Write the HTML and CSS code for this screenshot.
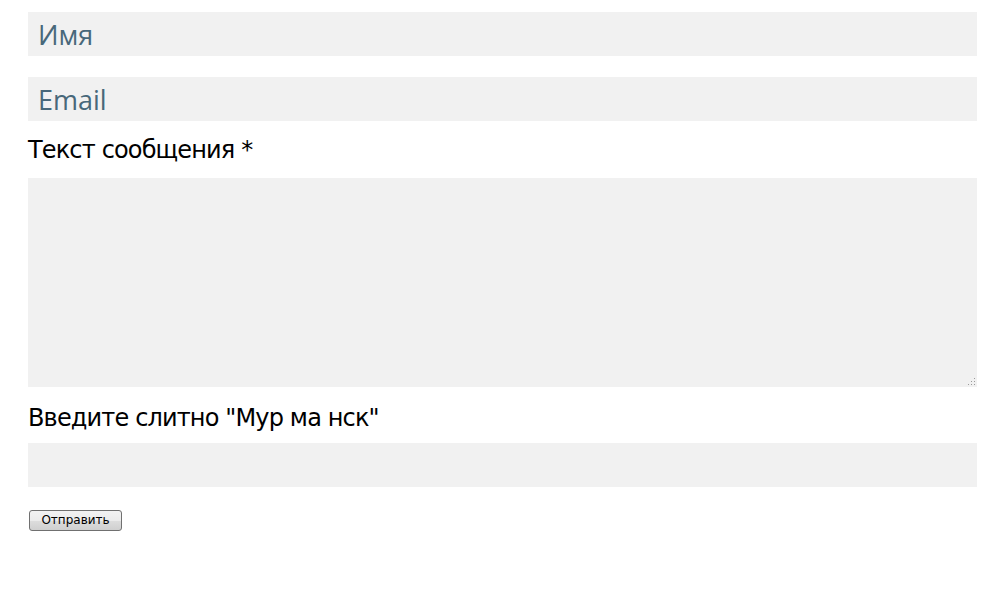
FILE: index.html
```html
<!DOCTYPE html>
<html lang="ru">
<head>
<meta charset="utf-8">
<link rel="stylesheet" href="styles.css">
</head>
<body>
<form class="form">
  <input class="field field-first" type="text" placeholder="Имя">
  <input class="field field-second" type="text" placeholder="Email">
  <label class="label label-msg">Текст сообщения *</label>
  <div class="area-wrap">
    <textarea class="area"></textarea>
    <span class="grip"></span>
  </div>
  <label class="label label-captcha">Введите слитно "Мур ма нск"</label>
  <input class="field field-captcha" type="text">
  <div class="actions"><button class="btn" type="button">Отправить</button></div>
</form>
</body>
</html>
```
FILE: styles.css
```css
html, body { margin: 0; padding: 0; background: #fff; }
.form {
  display: flex;
  flex-direction: column;
  width: 949px;
  padding: 12px 0 0 28px;
  font-family: "DejaVu Sans", Verdana, sans-serif;
}
.field {
  box-sizing: border-box;
  height: 44px;
  width: 949px;
  border: none;
  outline: none;
  background: #f1f1f1;
  padding: 0 10px;
  margin: 0;
  font-family: "Open Sans", sans-serif;
  font-size: 27px;
  color: #48687a;
}
.field::placeholder { color: #48687a; opacity: 1; }
.field-second { margin-top: 21px; }
.label {
  font-size: 24px;
  letter-spacing: -0.85px;
  color: #000;
  line-height: 28px;
}
.label-msg { margin-top: 15px; }
.area-wrap {
  position: relative;
  margin-top: 14px;
  width: 949px;
  height: 209px;
}
.area {
  box-sizing: border-box;
  display: block;
  width: 949px;
  height: 209px;
  margin: 0;
  border: none;
  outline: none;
  background: #f1f1f1;
  resize: none;
}
.grip {
  position: absolute;
  right: 2px;
  bottom: 2px;
  width: 8px;
  height: 8px;
  background:
    radial-gradient(circle, #9a9a9a 0.8px, transparent 1px) 0 0 / 3px 3px;
  clip-path: polygon(100% 0, 100% 100%, 0 100%);
}
.label-captcha { margin-top: 17px; }
.field-captcha { margin-top: 11px; }
.actions { margin-top: 22px; }
.btn {
  box-sizing: border-box;
  width: 93px;
  height: 21px;
  margin-left: 1px;
  font-family: "DejaVu Sans", Tahoma, sans-serif;
  font-size: 12px;
  padding: 0;
  border: 1px solid #707070;
  border-radius: 3px;
  background: linear-gradient(#f2f2f2 0%, #ebebeb 50%, #dddddd 51%, #cfcfcf 100%);
  color: #000;
}
```
